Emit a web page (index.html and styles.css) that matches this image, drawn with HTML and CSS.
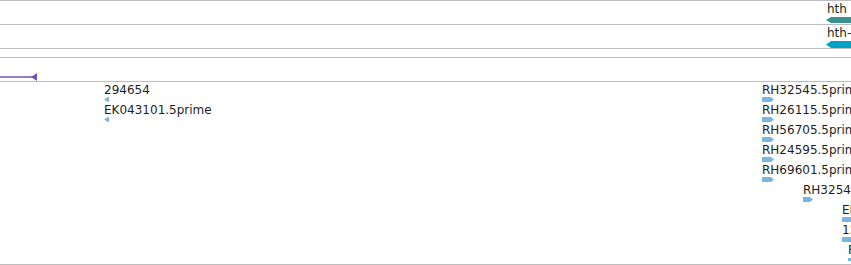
FILE: index.html
```html
<!DOCTYPE html>
<html lang="en">
  <head>
    <meta charset="UTF-8">
    <title>tracks</title>
    <link rel="stylesheet" href="styles.css">
  </head>
  <body>
    <div class="tracks">
      <div class="track track-gene">
        <div class="feat" style="left:827px;top:1px">
          <span class="label">hth</span>
          <svg class="bar" width="30" height="6"><polygon points="0,3 5,0 30,0 30,6 5,6" fill="#3a9090"/></svg>
        </div>
      </div>
      <div class="track track-gene">
        <div class="feat" style="left:827px;top:1px">
          <span class="label">hth-</span>
          <svg class="bar" width="30" height="7"><polygon points="0,3.5 5,0 30,0 30,7 5,7" fill="#00a3c6"/></svg>
        </div>
      </div>
      <div class="track track-thin"></div>
      <div class="track track-line">
        <svg class="span" width="40" height="10"><line x1="0" y1="5" x2="34" y2="5" stroke="#7255b5" stroke-width="1.5"/><polygon points="31,5 37,1 37,9" fill="#7255b5"/></svg>
      </div>
      <div class="track track-ests">
        <div class="est" style="left:104px;top:1px"><span class="label">294654</span><svg width="6" height="5"><polygon points="0,2.5 4,0 5,0 5,5 4,5" fill="#7ab6dc"/></svg></div>
        <div class="est" style="left:104px;top:21px"><span class="label">EK043101.5prime</span><svg width="6" height="5"><polygon points="0,2.5 4,0 5,0 5,5 4,5" fill="#7ab6dc"/></svg></div>

        <div class="est" style="left:762px;top:1px"><span class="label">RH32545.5prime</span><svg width="14" height="5"><polygon points="0,0 9,0 12,2.5 9,5 0,5" fill="#7ab6dc"/></svg></div>
        <div class="est" style="left:762px;top:21px"><span class="label">RH26115.5prime</span><svg width="14" height="5"><polygon points="0,0 9,0 12,2.5 9,5 0,5" fill="#7ab6dc"/></svg></div>
        <div class="est" style="left:762px;top:41px"><span class="label">RH56705.5prime</span><svg width="14" height="5"><polygon points="0,0 9,0 12,2.5 9,5 0,5" fill="#7ab6dc"/></svg></div>
        <div class="est" style="left:762px;top:61px"><span class="label">RH24595.5prime</span><svg width="14" height="5"><polygon points="0,0 9,0 12,2.5 9,5 0,5" fill="#7ab6dc"/></svg></div>
        <div class="est" style="left:762px;top:81px"><span class="label">RH69601.5prime</span><svg width="14" height="5"><polygon points="0,0 9,0 12,2.5 9,5 0,5" fill="#7ab6dc"/></svg></div>
        <div class="est" style="left:803px;top:101px"><span class="label">RH32545.5prime</span><svg width="14" height="5"><polygon points="0,0 7,0 10,2.5 7,5 0,5" fill="#7ab6dc"/></svg></div>
        <div class="est" style="left:842px;top:121px"><span class="label">EK043101.5prime</span><svg width="14" height="5"><polygon points="0,0 9,0 12,2.5 9,5 0,5" fill="#7ab6dc"/></svg></div>
        <div class="est" style="left:842px;top:141px"><span class="label">12345</span><svg width="14" height="5"><polygon points="0,0 9,0 12,2.5 9,5 0,5" fill="#7ab6dc"/></svg></div>
        <div class="est" style="left:848px;top:161px"><span class="label">RH3</span><svg width="14" height="5"><polygon points="0,1 4,1 4,4 0,4" fill="#7ab6dc"/></svg></div>
      </div>
    </div>
  </body>
</html>
```

FILE: styles.css
```css
* { box-sizing: border-box; margin: 0; padding: 0; }
body {
  font-family: "DejaVu Sans", sans-serif;
  font-size: 12px;
  color: #1e1e1e;
  background: #fff;
  overflow: hidden;
}
.tracks {
  width: 851px;
  border-bottom: 1px solid #bdbdbd;
}
.track {
  position: relative;
  border-top: 1px solid #bdbdbd;
  overflow: hidden;
}
.track-gene { height: 24px; }
.track-thin { height: 9px; }
.track-line { height: 24px; }
.track-ests { height: 183px; }
.feat, .est {
  position: absolute;
  display: flex;
  flex-direction: column;
  white-space: nowrap;
}
.label {
  line-height: 14px;
  height: 14px;
}
.feat .bar { margin-top: 1px; margin-left: -1px; }
.est svg { margin-top: 0; display: block; }
.span {
  position: absolute;
  left: 0;
  top: 14px;
}
```
